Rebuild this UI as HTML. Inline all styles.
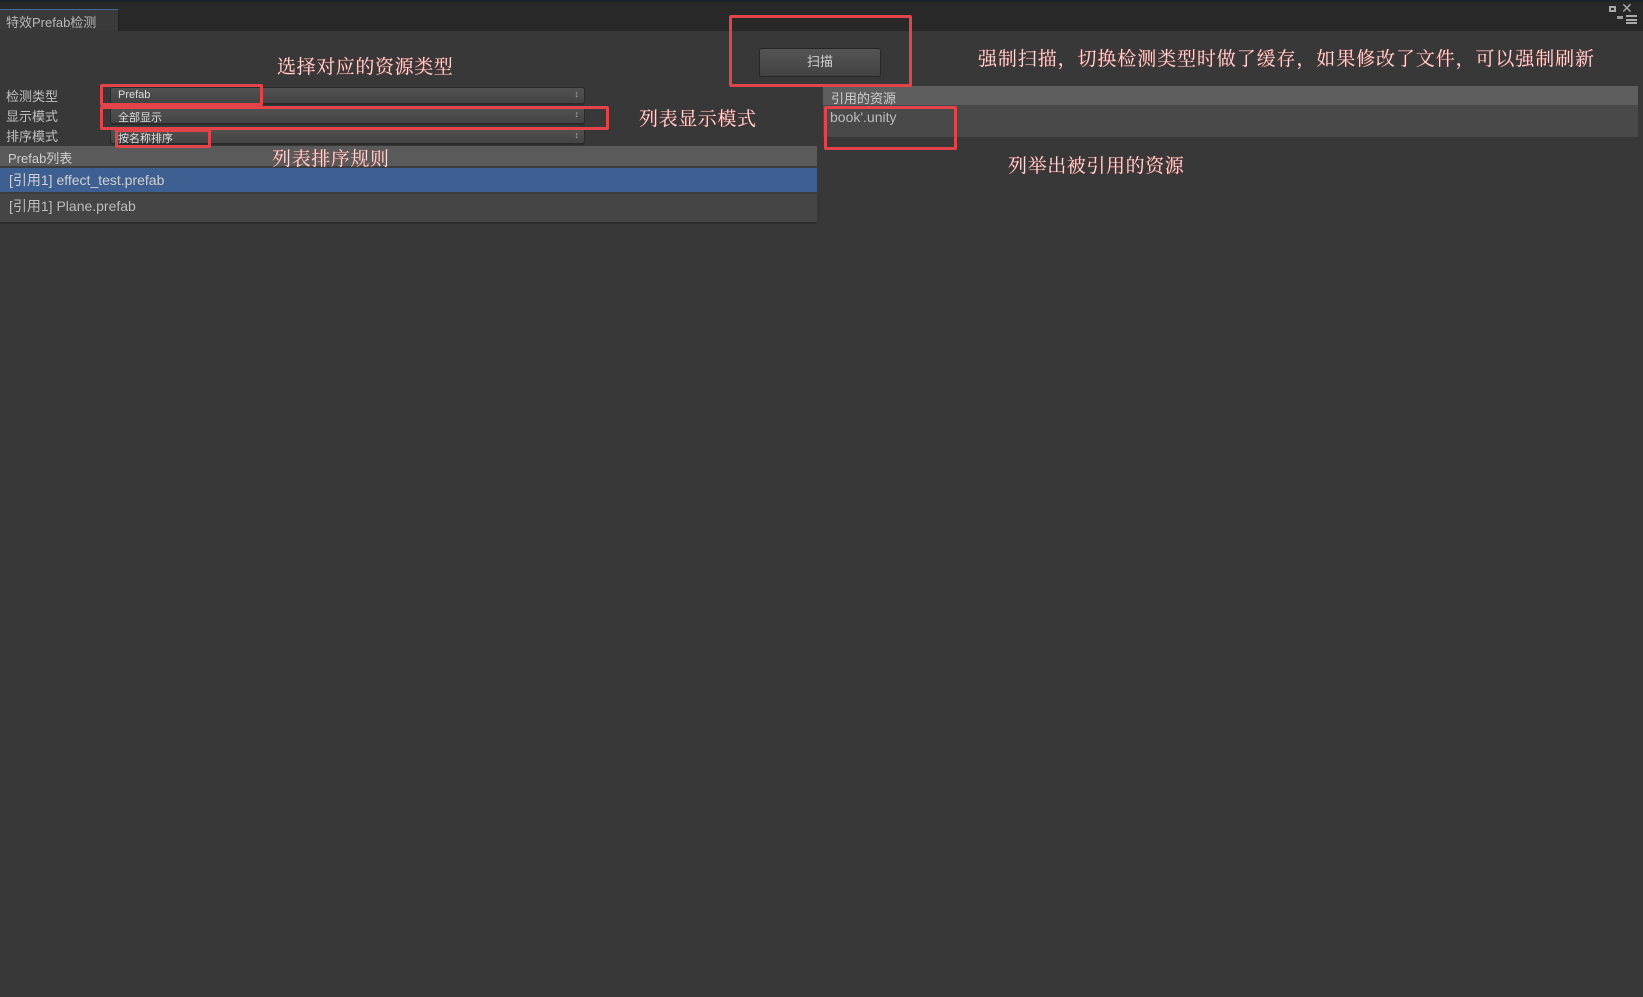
<!DOCTYPE html>
<html><head><meta charset="utf-8"><style>
*{margin:0;padding:0;box-sizing:border-box}
body{width:1643px;height:997px;background:#383838;position:relative;overflow:hidden;font-family:"Liberation Sans","Noto Sans CJK SC",sans-serif;color:#c8c8c8}
.a{position:absolute}
.topbar{left:0;top:0;width:1643px;height:31px;background:#282828;border-top:2px solid #1a2230}
.tab{left:0;top:9px;width:119px;height:22px;background:#3a3a3a;border-right:1px solid #222;border-top:1px solid #4a6a9a;font-size:13px;color:#b8b8b8;padding:2px 0 0 6px}
.lbl{font-size:13px;color:#c0c0c0;left:6px}
.dd{left:110px;width:475px;border-radius:3px;background:linear-gradient(#525252,#444);border:1px solid #2a2a2a;font-size:11px;color:#ddd;padding:1px 0 0 7px;box-shadow:0 1px 0 #2c2c2c}
.dd:after{content:"\2195";position:absolute;right:5px;top:1px;font-size:9px;color:#aaa}
.red{border:3px solid #e2444a;border-radius:2px}
.ann{font-family:"Liberation Serif","Noto Serif CJK SC",serif;font-size:19px;color:#fadada;text-shadow:0 0 1px #e04040;white-space:nowrap;letter-spacing:0.6px}
.hdr{background:#5a5a5a;font-size:13px;color:#cfcfcf;padding:2px 0 0 8px}
</style></head><body>
<div class="a topbar"></div>
<div class="a tab">特效Prefab检测</div>
<div class="a" style="left:1609px;top:6px;width:7px;height:6px;border:2px solid #aaa"></div>
<div class="a" style="left:1621px;top:0px;font-size:14px;color:#aaa">✕</div>
<div class="a" style="left:1617px;top:16px;width:6px;height:3px;background:#999"></div>
<div class="a" style="left:1626px;top:15px;width:11px;height:9px;border-top:2px solid #aaa;border-bottom:2px solid #aaa"></div>
<div class="a" style="left:1626px;top:19px;width:11px;height:2px;background:#aaa"></div>

<div class="a lbl" style="top:86px">检测类型</div>
<div class="a lbl" style="top:106px">显示模式</div>
<div class="a lbl" style="top:126px">排序模式</div>
<div class="a dd" style="top:87px;height:17px">Prefab</div>
<div class="a dd" style="top:107px;height:17px">全部显示</div>
<div class="a dd" style="top:128px;height:16px">按名称排序</div>

<div class="a" style="left:0;top:146px;width:817px;height:78px;background:#3c3c3c"></div>
<div class="a hdr" style="left:0;top:146px;width:817px;height:20px">Prefab列表</div>
<div class="a" style="left:0;top:168px;width:817px;height:24px;background:#3e5f91;font-size:14px;color:#d0d0d0;padding:2px 0 0 9px">[引用1] effect_test.prefab</div>
<div class="a" style="left:0;top:194px;width:817px;height:28px;background:#454545;font-size:14px;color:#bcbcbc;padding:2px 0 0 9px">[引用1] Plane.prefab</div>
<div class="a" style="left:0;top:222px;width:817px;height:2px;background:#2e2e2e"></div>

<div class="a hdr" style="left:823px;top:86px;width:815px;height:19px;background:#5e5e5e">引用的资源</div>
<div class="a" style="left:823px;top:105px;width:815px;height:32px;background:#494949;font-size:14px;color:#bcbcbc;padding:4px 0 0 7px">book'.unity</div>

<div class="a" style="left:759px;top:48px;width:122px;height:29px;border-radius:3px;background:linear-gradient(#545454,#434343);border:1px solid #262626;font-size:13px;color:#d0d0d0;text-align:center;line-height:26px">扫描</div>

<div class="a red" style="left:729px;top:15px;width:183px;height:72px"></div>
<div class="a red" style="left:100px;top:84px;width:163px;height:22px"></div>
<div class="a red" style="left:100px;top:106px;width:509px;height:24px"></div>
<div class="a red" style="left:115px;top:129px;width:96px;height:19px"></div>
<div class="a red" style="left:824px;top:106px;width:133px;height:44px"></div>

<div class="a ann" style="left:277px;top:52px">选择对应的资源类型</div>
<div class="a ann" style="left:978px;top:44px;letter-spacing:0.9px">强制扫描，切换检测类型时做了缓存，如果修改了文件，可以强制刷新</div>
<div class="a ann" style="left:639px;top:104px">列表显示模式</div>
<div class="a ann" style="left:272px;top:144px">列表排序规则</div>
<div class="a ann" style="left:1008px;top:151px">列举出被引用的资源</div>
</body></html>
